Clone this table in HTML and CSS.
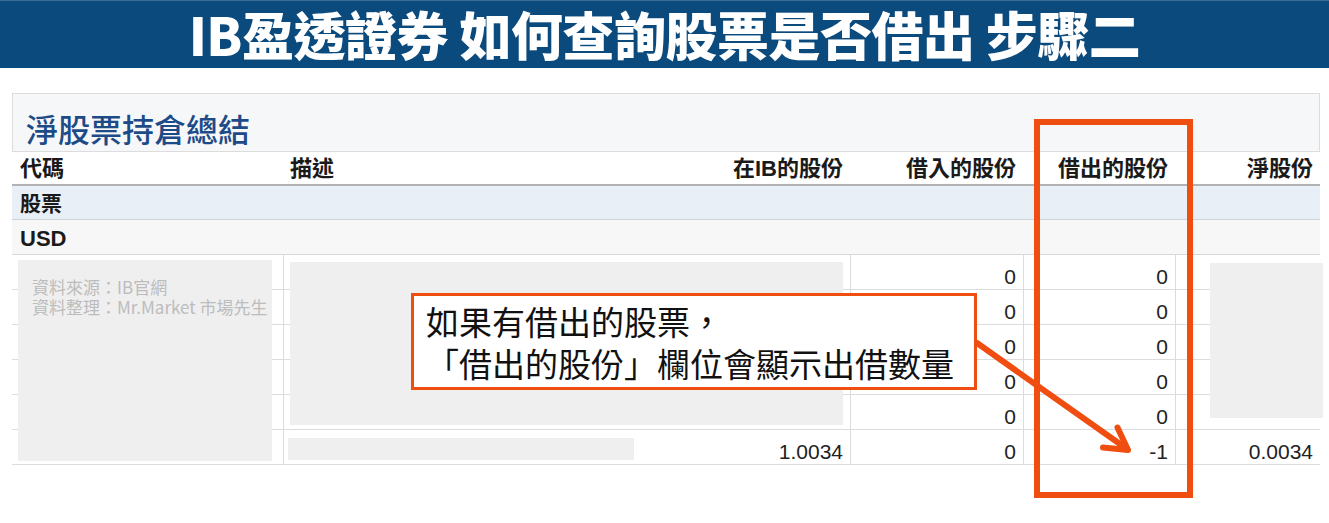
FILE: index.html
```html
<!DOCTYPE html>
<html lang="zh-Hant">
<head>
    <meta charset="UTF-8">
    <meta name="viewport" content="width=device-width, initial-scale=1.0">
    <title>IB盈透證券 如何查詢股票是否借出 步驟二</title>
    <link rel="stylesheet" href="styles.css">
</head>
<body>
    <header class="banner">
        <h1>IB盈透證券 如何查詢股票是否借出 步驟二</h1>
    </header>

    <div class="report">
        <div class="report-title">
            <h2>淨股票持倉總結</h2>
        </div>

        <div class="row head">
            <div class="cell">代碼</div>
            <div class="cell">描述</div>
            <div class="cell num">在IB的股份</div>
            <div class="cell num">借入的股份</div>
            <div class="cell num">借出的股份</div>
            <div class="cell num">淨股份</div>
        </div>
        <div class="row group">
            <div class="cell">股票</div>
        </div>
        <div class="row currency">
            <div class="cell">USD</div>
        </div>

        <div class="row data">
            <div class="cell"></div><div class="cell line"></div><div class="cell num"></div>
            <div class="cell num line">0</div><div class="cell num line">0</div><div class="cell num line"></div>
        </div>
        <div class="row data">
            <div class="cell"></div><div class="cell line"></div><div class="cell num"></div>
            <div class="cell num line">0</div><div class="cell num line">0</div><div class="cell num line"></div>
        </div>
        <div class="row data">
            <div class="cell"></div><div class="cell line"></div><div class="cell num"></div>
            <div class="cell num line">0</div><div class="cell num line">0</div><div class="cell num line"></div>
        </div>
        <div class="row data">
            <div class="cell"></div><div class="cell line"></div><div class="cell num"></div>
            <div class="cell num line">0</div><div class="cell num line">0</div><div class="cell num line"></div>
        </div>
        <div class="row data">
            <div class="cell"></div><div class="cell line"></div><div class="cell num"></div>
            <div class="cell num line">0</div><div class="cell num line">0</div><div class="cell num line"></div>
        </div>
        <div class="row data">
            <div class="cell"></div><div class="cell line"></div><div class="cell num">1.0034</div>
            <div class="cell num line">0</div><div class="cell num line">-1</div><div class="cell num line">0.0034</div>
        </div>

        <!-- 遮蔽區塊 -->
        <div class="mask mask-code">
            <p class="source">資料來源：IB官網<br>資料整理：Mr.Market 市場先生</p>
        </div>
        <div class="mask mask-desc"></div>
        <div class="mask mask-desc-total"></div>
        <div class="mask mask-net"></div>

        <!-- 標註 -->
        <div class="frame"></div>
        <div class="callout">如果有借出的股票，<br>「借出的股份」欄位會顯示出借數量</div>
        <svg class="arrow" width="1308" height="420" viewBox="0 0 1308 420">
            <g fill="none" stroke="#f04e10" stroke-width="6" stroke-linecap="round" stroke-linejoin="round">
                <line x1="965" y1="250" x2="1115" y2="356" />
                <polyline points="1105.5,334.5 1116,357 1091,354.5" />
            </g>
        </svg>
    </div>
</body>
</html>
```

FILE: styles.css
```css
body {
    margin: 0;
    min-height: 523px;
    background: #fff;
    font-family: "Liberation Sans", "Noto Sans CJK TC", sans-serif;
    color: #1a1a1a;
}
.banner {
    height: 68px;
    background-color: #0b4a7d;
    border-top: 1px solid #3b6c96;
    box-sizing: border-box;
    overflow: hidden;
}
.banner h1 {
    margin: 0;
    text-align: center;
    color: #fff;
    font-family: "Noto Sans CJK TC", sans-serif;
    font-size: 52px;
    font-weight: 900;
    line-height: 66px;
    letter-spacing: -0.5px;
}
.report {
    position: relative;
    width: 1308px;
    margin: 25px 0 0 12px;
    padding-bottom: 58px;
}
.report-title {
    height: 59px;
    box-sizing: border-box;
    border: 1px solid #dcdcdc;
    background-color: #f6f7f9;
}
.report-title h2 {
    margin: 0;
    padding: 15px 0 0 13px;
    font-family: "Noto Sans CJK TC", sans-serif;
    font-size: 32px;
    font-weight: 500;
    line-height: 38px;
    color: #1d4b87;
}
.row {
    display: grid;
    grid-template-columns: 271px 417px 150px 173px 152px 145px;
    box-sizing: border-box;
}
.cell {
    padding: 0 8px;
    white-space: nowrap;
}
.num {
    text-align: right;
    padding-right: 7px;
}
.head {
    height: 34px;
    border-bottom: 2px solid #b3b3b3;
    font-size: 22px;
    font-weight: bold;
    line-height: 33px;
}
.head .cell:nth-child(2) {
    padding-left: 7px;
}
.group {
    height: 34px;
    background-color: #e9eff7;
    border-bottom: 1px solid #d0d3d8;
    font-size: 21px;
    font-weight: bold;
    line-height: 36px;
}
.currency {
    height: 35px;
    background-color: #f7f7f7;
    border-bottom: 1px solid #d8d8d8;
    font-size: 22px;
    font-weight: bold;
    line-height: 38px;
}
.data {
    height: 35px;
    border-bottom: 1px solid #dcdcdc;
    font-size: 21px;
    line-height: 26px;
    color: #222;
}
.data .cell {
    padding-top: 9px;
}
.line {
    border-left: 1px solid #dcdcdc;
}
.mask {
    position: absolute;
    background-color: #efefef;
}
.mask-code {
    left: 6px;
    top: 167px;
    width: 254px;
    height: 201px;
}
.mask-desc {
    left: 278px;
    top: 169px;
    width: 553px;
    height: 163px;
}
.mask-desc-total {
    left: 276px;
    top: 345px;
    width: 346px;
    height: 22px;
}
.mask-net {
    left: 1198px;
    top: 170px;
    width: 113px;
    height: 155px;
}
.source {
    margin: 0;
    padding: 17px 0 0 14px;
    font-family: "Noto Sans CJK TC", sans-serif;
    font-size: 17px;
    line-height: 20px;
    color: #bcbcbc;
    white-space: nowrap;
}
.frame {
    position: absolute;
    left: 1022px;
    top: 26px;
    width: 159px;
    height: 379px;
    box-sizing: border-box;
    border: 6px solid #f04e10;
}
.callout {
    position: absolute;
    left: 399px;
    top: 200px;
    width: 566px;
    height: 97px;
    box-sizing: border-box;
    padding: 4px 0 0 12px;
    border: 3px solid #f04e10;
    background-color: #fff;
    font-family: "Noto Sans CJK TC", sans-serif;
    font-size: 33px;
    line-height: 42px;
    color: #111;
    white-space: nowrap;
}
.arrow {
    position: absolute;
    left: 0;
    top: 0;
    overflow: visible;
    pointer-events: none;
}
```
